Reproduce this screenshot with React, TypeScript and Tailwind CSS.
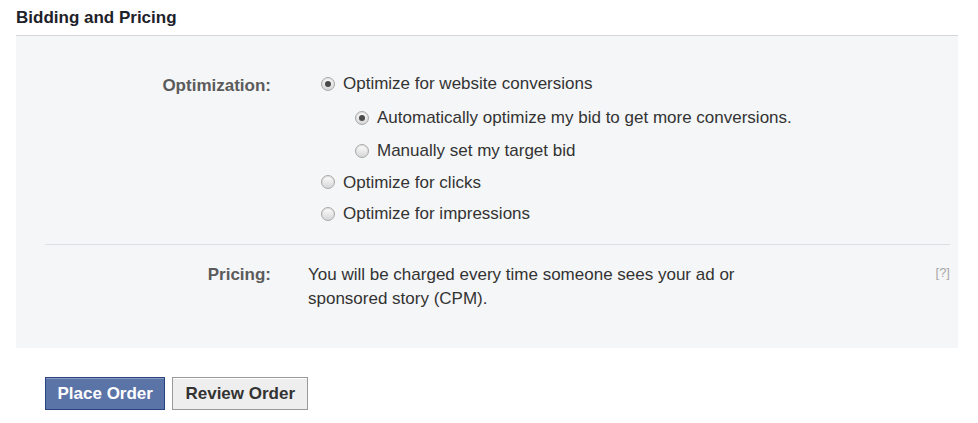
import React from "react";

const font = { fontFamily: '"Liberation Sans", Arial, sans-serif' };

// Little grey radio like the old FB ads form
const Radio = ({ checked = false }: { checked?: boolean }) => (
  <span className="relative inline-flex h-[14px] w-[14px] shrink-0 items-center justify-center rounded-full border border-[#a9a9a9] bg-gradient-to-b from-[#ffffff] to-[#d6d6d6] shadow-[inset_0_1px_1px_rgba(0,0,0,0.15)]">
    {checked && <span className="h-[6px] w-[6px] rounded-full bg-[#4a4a4a]" />}
  </span>
);

const Option = ({
  label,
  checked,
  indent = false,
  h,
}: {
  label: string;
  checked?: boolean;
  indent?: boolean;
  h: string;
}) => (
  <div className={`flex items-center gap-[8px] ${h} ${indent ? "pl-[34px]" : ""}`}>
    <Radio checked={checked} />
    <span className="text-[17px] text-[#333333]">{label}</span>
  </div>
);

export default function App() {
  return (
    <div className="h-[423px] w-full bg-white" style={font}>
      <div className="ml-[16px] w-[942px]">
        {/* Section title */}
        <div className="flex h-[35px] items-center text-[17px] font-bold text-[#1d2129]">
          Bidding and Pricing
        </div>

        {/* Grey panel */}
        <div className="h-[313px] border-t border-[#d3d6db] bg-[#f5f6f7]">
          {/* Optimization row */}
          <div className="flex pt-[31px]">
            <div className="w-[255px] pt-[6px] text-right text-[17px] font-bold text-[#5b5b5b]">
              Optimization:
            </div>
            <div className="ml-[50px] flex flex-col">
              <Option h="h-[33.5px]" label="Optimize for website conversions" checked />
              <Option h="h-[34px]" label="Automatically optimize my bid to get more conversions." checked indent />
              <Option h="h-[32px]" label="Manually set my target bid" indent />
              <Option h="h-[31.5px]" label="Optimize for clicks" />
              <Option h="h-[32px]" label="Optimize for impressions" />
            </div>
          </div>

          {/* Separator */}
          <div className="ml-[29px] mr-[8px] mt-[14px] border-t border-[#dddfe2]" />

          {/* Pricing row */}
          <div className="flex pt-[18px]">
            <div className="w-[255px] text-right text-[17px] font-bold leading-[24px] text-[#5b5b5b]">
              Pricing:
            </div>
            <div className="ml-[37px] w-[470px] text-[17px] leading-[24px] text-[#333333]">
              You will be charged every time someone sees your ad or sponsored story (CPM).
            </div>
            <div className="ml-auto mr-[8px] text-[13px] leading-[20px] text-[#a7a7a7]">[?]</div>
          </div>
        </div>

        {/* Actions */}
        <div className="ml-[29px] mt-[29px] flex gap-[7px]">
          <button className="h-[33px] border border-[#29447e] bg-[#5b74a8] px-[11.5px] text-[17px] font-bold text-white shadow-[inset_0_1px_0_#8a9cc2]">
            Place Order
          </button>
          <button className="h-[33px] border border-[#999999] bg-[#eeeeee] px-[12px] text-[17px] font-bold text-[#333333] shadow-[inset_0_1px_0_#ffffff]">
            Review Order
          </button>
        </div>
      </div>
    </div>
  );
}
